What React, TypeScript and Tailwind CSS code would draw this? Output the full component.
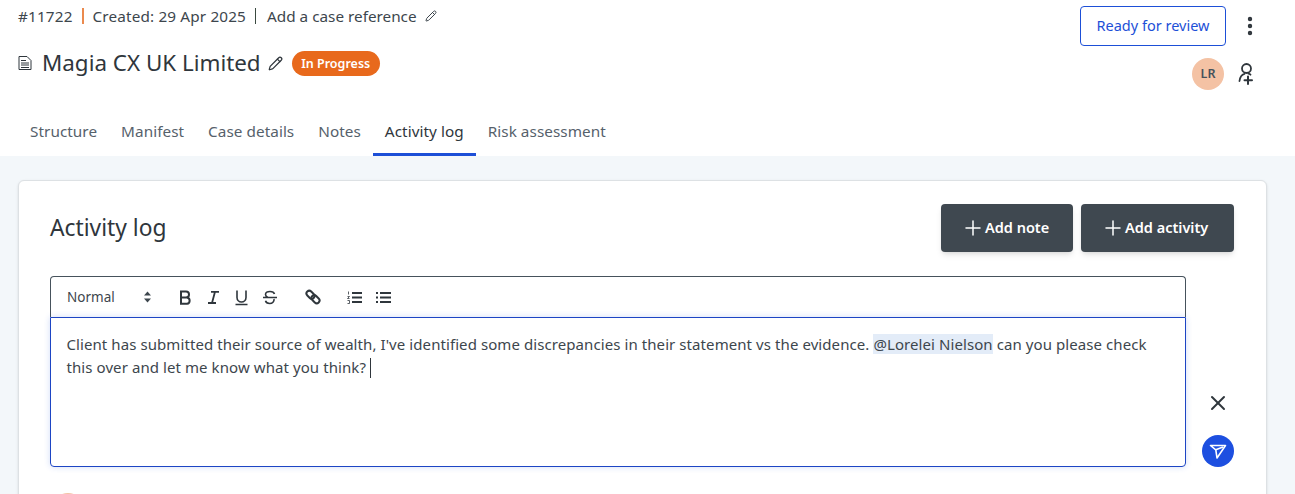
import React from "react";
import { Pencil, Plus, X, EllipsisVertical } from "lucide-react";

const tabs = ["Structure", "Manifest", "Case details", "Notes", "Activity log", "Risk assessment"];

function DocIcon() {
  return (
    <svg width="14" height="14" viewBox="0 0 14 14" fill="none" stroke="#2f363c" strokeWidth="1">
      <path d="M1 .5h8l4 4v9H1z" />
      <path d="M3 4.500h5M3 7h8M3 9h8M3 11.500h8" />
    </svg>
  );
}

function AddUserIcon() {
  return (
    <svg width="18" height="24" viewBox="0 0 18 24" fill="none" stroke="#2f363c" strokeWidth="1.800" strokeLinecap="round">
      <circle cx="8.500" cy="6.500" r="4.500" />
      <path d="M1.500 19c.4-3.600 2.400-6.500 5-7.200" />
      <path d="M10.500 11.600c.8.200 1.500.6 2 1.100" />
      <path d="M10 14.500v7.500M6.500 18.200h7.500" strokeWidth="2" />
    </svg>
  );
}

function SendIcon() {
  return (
    <svg width="18" height="18" viewBox="0 0 18 18" fill="none" stroke="#fff" strokeWidth="1.600" strokeLinejoin="round">
      <path d="M1.500 3.500h15L8 16 6.800 7.800z" />
      <path d="M6.800 7.800 14 5" />
    </svg>
  );
}

function LinkIcon() {
  return (
    <svg width="16" height="16" viewBox="0 0 16 16" fill="none" stroke="#2f363c" strokeWidth="2">
      <rect x="1" y="3" width="9" height="5.500" rx="2.750" transform="rotate(45 5.500 5.750)" />
      <rect x="6" y="7.500" width="9" height="5.500" rx="2.750" transform="rotate(45 10.500 10.250)" />
    </svg>
  );
}

function Toolbar() {
  return (
    <div className="flex h-[41px] items-center rounded-t-[4px] border border-b-0 border-[#46525c] pl-[16px] text-[#3d464d]">
      <span className="w-[76px] text-[13.500px]">Normal</span>
      <svg width="9" height="12" viewBox="0 0 9 12" fill="#3d464d">
        <path d="M4.500 0.500 8 4.500H1zM4.500 11.500 1 7.500h7z" />
      </svg>
      <div className="ml-[25px] flex items-center gap-[11px]">
        <svg width="17" height="17" viewBox="0 0 17 17" fill="none" stroke="#2f363c" strokeWidth="2">
          <path d="M4 2.500h5a3 3 0 0 1 0 6H4zM4 8.500h6a3.200 3.200 0 0 1 0 6.300H4z" />
        </svg>
        <svg width="17" height="17" viewBox="0 0 17 17" fill="none" stroke="#2f363c" strokeWidth="1.800">
          <path d="M6 2.800h8M3 14h8M10 2.800 7 14" />
        </svg>
        <svg width="17" height="17" viewBox="0 0 17 17" fill="none" stroke="#2f363c" strokeWidth="1.600">
          <path d="M4 1.500v7a4.500 4.500 0 0 0 9 0v-7M2.500 15.500h12" />
        </svg>
        <svg width="17" height="17" viewBox="0 0 17 17" fill="none" stroke="#2f363c" strokeWidth="1.600">
          <path d="M13.500 5c-.5-1.700-2.300-2.500-4.500-2.500-2.500 0-4.500 1.100-4.500 3 0 1.300 1 2.300 2.500 3M13 10c.4 2.500-1.700 4.500-4.200 4.500-2.300 0-3.900-1-4.300-2.700M2 8.500h14" />
        </svg>
      </div>
      <span className="ml-[27px]">
        <LinkIcon />
      </span>
      <div className="ml-[26px] flex items-center gap-[14px]">
        <svg width="15" height="13" viewBox="0 0 15 13" fill="none" stroke="#2f363c" strokeWidth="1.800">
          <path d="M5 2h10M5 6.500h10M5 11h10" />
          <path d="M1.500.5v3M.5 5.500h2l-2 2h2M.5 9.500h2v3h-2" strokeWidth=".8" />
        </svg>
        <svg width="15" height="13" viewBox="0 0 15 13" fill="none" stroke="#2f363c" strokeWidth="1.800">
          <path d="M4 2h11M4 6.500h11M4 11h11M0 2h2M0 6.500h2M0 11h2" />
        </svg>
      </div>
    </div>
  );
}

export default function App() {
  return (
    <div className="h-[494px] overflow-hidden bg-[#f3f7fa] font-['Noto_Sans',sans-serif] text-[#2f363c]">
      <header className="h-[156px] bg-white">
        <div className="flex h-[110px] justify-between pl-[18px] pr-[33px]">
          <div>
            <div className="flex h-[32px] items-center text-[15.300px] text-[#3d464d]">
              <span className="tracking-[0.15px]">#11722</span>
              <span className="mx-[9px] h-[16px] w-[2px] bg-[#eb8a4e]" />
              <span className="tracking-[0.15px]">Created: 29 Apr 2025</span>
              <span className="ml-[9px] mr-[11px] h-[16px] w-px bg-[#3a4a40]" />
              <span>Add a case reference</span>
              <Pencil size={12} className="ml-[8px]" />
            </div>
            <div className="mt-[15px] flex items-center">
              <DocIcon />
              <h1 className="ml-[10px] text-[22.400px] leading-[32px]">Magia CX UK Limited</h1>
              <Pencil size={15} className="ml-[7px]" />
              <span className="ml-[9px] rounded-full bg-[#e8691c] px-[9.500px] py-[3px] text-[12.500px] font-semibold leading-[19px] text-white">
                In Progress
              </span>
            </div>
          </div>
          <div className="flex flex-col items-end pt-[6px]">
            <div className="flex items-center">
              <button className="h-[40px] w-[146px] rounded-[4px] border border-[#1d4fd7] text-[14.500px] text-[#1d4fd7]">
                Ready for review
              </button>
              <EllipsisVertical size={24} strokeWidth={2.400} className="ml-[12px] text-[#2f363c]" />
            </div>
            <div className="mt-[12px] flex items-center">
              <span className="flex h-[32px] w-[32px] items-center justify-center rounded-full bg-[#f4c2a4] text-[12.500px] font-semibold text-[#46525c]">
                LR
              </span>
              <span className="ml-[14px] mr-[6px] flex">
                <AddUserIcon />
              </span>
            </div>
          </div>
        </div>
        <nav className="flex h-[46px] pl-[18px]">
          {tabs.map((t) => (
            <div
              key={t}
              className={
                t === "Activity log"
                  ? "flex items-center border-b-[3px] border-[#1d4fd7] px-[12px] text-[15.300px] tracking-[0.05px] text-[#2f363c]"
                  : "flex items-center border-b-[3px] border-transparent px-[12px] text-[15.300px] tracking-[0.05px] text-[#56616b]"
              }
            >
              {t}
            </div>
          ))}
        </nav>
      </header>
      <main className="ml-[18px] mt-[24px] h-[400px] w-[1249px] rounded-[6px] border border-[#dde1e4] bg-white pl-[31px] pr-[32px] pt-[23px] shadow-sm">
        <div className="flex items-center justify-between">
          <h2 className="text-[22.800px]">Activity log</h2>
          <div className="flex gap-[8px]">
            <button className="flex h-[48px] w-[132px] items-center rounded-[4px] bg-[#3f4850] pl-[20px] text-[14.500px] font-semibold text-white shadow-md">
              <Plus size={24} strokeWidth={1.500} />
              Add note
            </button>
            <button className="flex h-[48px] w-[153px] items-center rounded-[4px] bg-[#3f4850] pl-[20px] text-[14.500px] font-semibold text-white shadow-md">
              <Plus size={24} strokeWidth={1.500} />
              Add activity
            </button>
          </div>
        </div>
        <div className="mt-[24px] flex">
          <div className="w-[1136px]">
            <Toolbar />
            <div className="h-[150px] rounded-b-[4px] border border-[#1d45c4] px-[15.500px] py-[15px] text-[15px] leading-[23px] tracking-[0.08px] text-[#3d464d] shadow-[0_0_6px_rgba(29,79,215,0.2)]">
              Client has submitted their source of wealth, I've identified some discrepancies in their statement vs the evidence.{" "}
              <span className="bg-[#e3ecf8]">@Lorelei Nielson</span> can you please check this over and let me know what you think?
              <span className="-mb-[5px] ml-[4px] inline-block h-[20px] w-px bg-[#2f363c]" />
            </div>
          </div>
          <div className="flex flex-1 flex-col items-end justify-end">
            <X size={24} strokeWidth={2} className="mb-[20px] mr-[4px] text-[#2f363c]" />
            <span className="flex h-[32px] w-[32px] items-center justify-center rounded-full bg-[#1d4fe0]">
              <SendIcon />
            </span>
          </div>
        </div>
        <div className="ml-[2px] mt-[26px] h-[32px] w-[32px] rounded-full bg-[#f4c2a4]" />
      </main>
    </div>
  );
}
